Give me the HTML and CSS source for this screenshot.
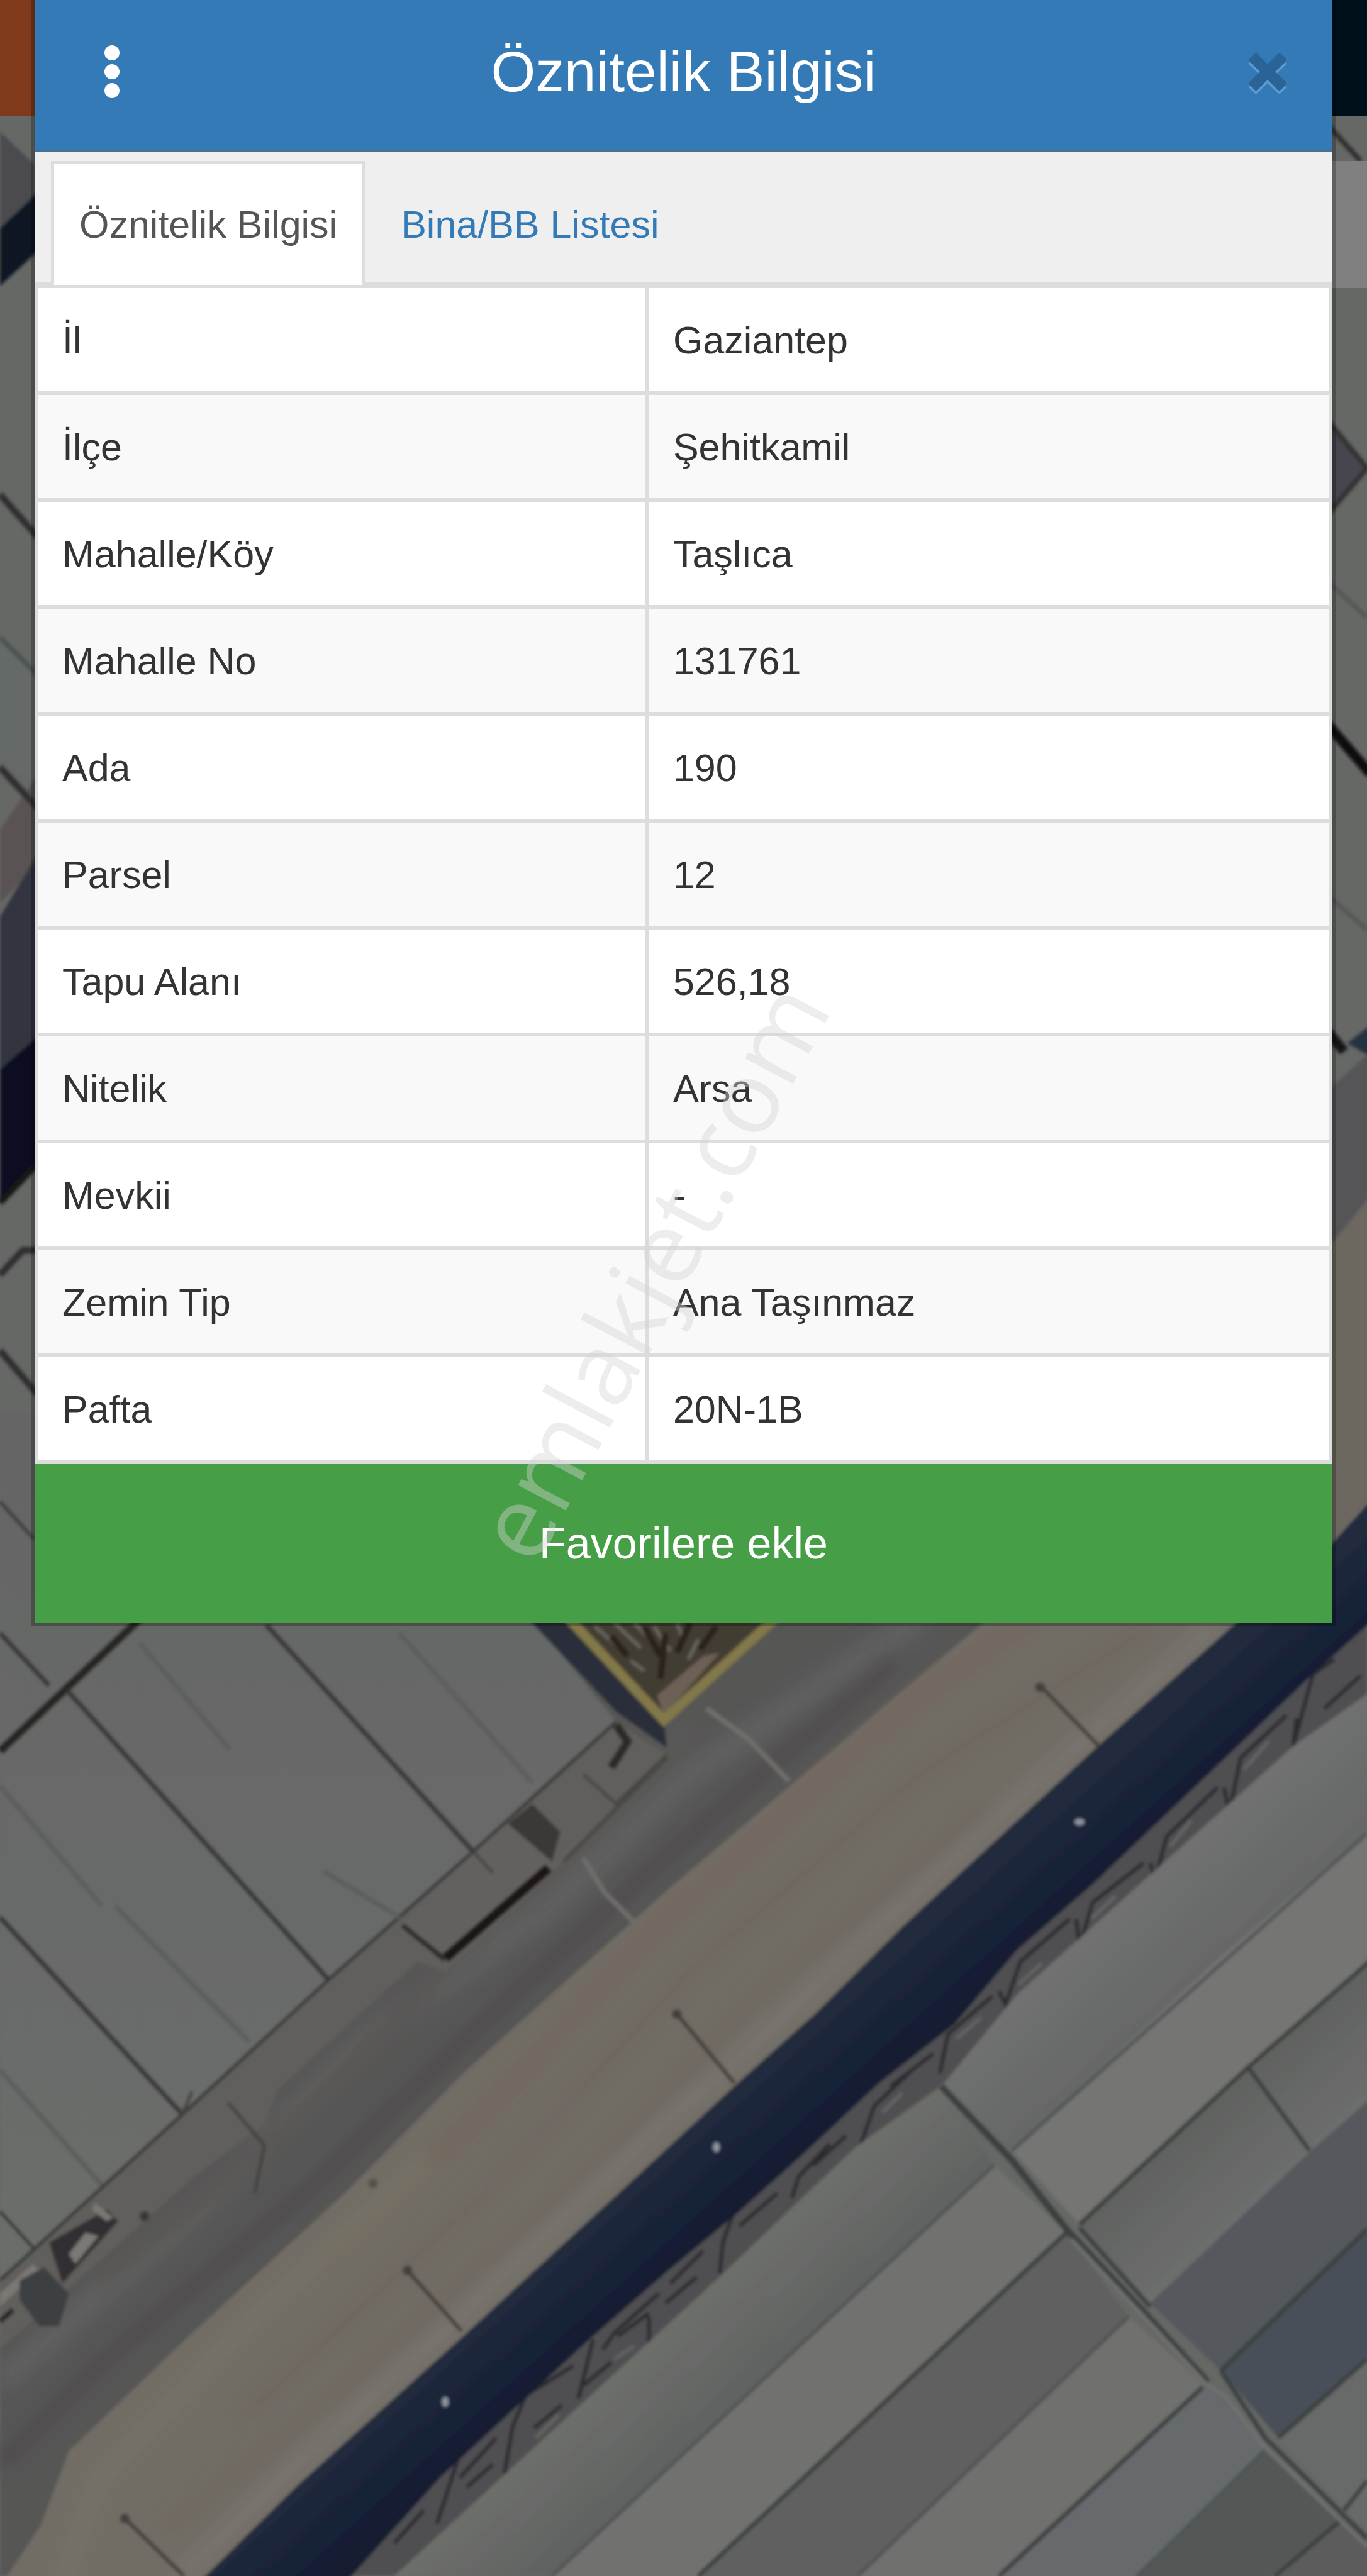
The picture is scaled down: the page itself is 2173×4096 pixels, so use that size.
FILE: index.html
```html
<!DOCTYPE html>
<html lang="tr">
<head>
<meta charset="utf-8">
<meta name="viewport" content="width=device-width, initial-scale=1">
<title>Öznitelik Bilgisi</title>
<link rel="stylesheet" href="styles.css">
</head>
<body>
<div class="page">
  <svg class="map" viewBox="0 0 832 1568" preserveAspectRatio="xMidYMid slice" aria-hidden="true">
    <defs>
      <filter id="soft" x="-5%" y="-5%" width="110%" height="110%"><feGaussianBlur stdDeviation="1.1"/></filter>
      <filter id="softer" x="-10%" y="-10%" width="120%" height="120%"><feGaussianBlur stdDeviation="5"/></filter>
      <linearGradient id="roof" gradientUnits="userSpaceOnUse" x1="0" y1="900" x2="0" y2="1390">
        <stop offset="0" stop-color="#656565"/><stop offset="0.5" stop-color="#686a69"/><stop offset="1" stop-color="#6b6e6b"/>
      </linearGradient>
      <linearGradient id="shed" gradientUnits="userSpaceOnUse" x1="640" y1="1190" x2="690" y2="1245">
        <stop offset="0" stop-color="#717272"/><stop offset="1" stop-color="#656766"/>
      </linearGradient>
      <linearGradient id="shed-low" gradientUnits="userSpaceOnUse" x1="440" y1="1390" x2="490" y2="1445">
        <stop offset="0" stop-color="#6c6e6b"/><stop offset="1" stop-color="#5c5f5e"/>
      </linearGradient>
      <linearGradient id="shed-mid" gradientUnits="userSpaceOnUse" x1="700" y1="1310" x2="750" y2="1365">
        <stop offset="0" stop-color="#5f615f"/><stop offset="1" stop-color="#6e6f6f"/>
      </linearGradient>
      <linearGradient id="canal" gradientUnits="userSpaceOnUse" x1="480" y1="1240" x2="525" y2="1290">
        <stop offset="0" stop-color="#232b3d"/><stop offset="0.45" stop-color="#192339"/><stop offset="1" stop-color="#14192e"/>
      </linearGradient>
    </defs>
    <rect width="832" height="1568" fill="#666866"/>
    <g filter="url(#soft)">
      <!-- road and sand lot -->
      <path fill="#575655" d="M300 960H832V1060L240 1568H0V1380Z"/>
      <path fill="#716d65" d="M640 960H832V1000L127 1590H-10L25 1537L42 1492L113 1424L212 1333L282 1262L408 1149L597 989Z"/>
      <g filter="url(#softer)" fill="none">
        <path stroke="#5f5e5e" stroke-width="16" d="M560 985L420 1080L330 1165L230 1235L120 1345L0 1450"/>
        <path stroke="#4f4e4d" stroke-width="12" d="M545 1010L400 1135L290 1235L180 1340L60 1440L0 1500"/>
        <path stroke="#5a5856" stroke-width="12" d="M420 1050L340 1130L180 1290L60 1390"/>
        <path stroke="#73685f" stroke-width="12" d="M640 975L550 1040L400 1175L290 1290L200 1375"/>
        <path stroke="#6a645c" stroke-width="5" d="M700 990L560 1080L420 1200L300 1330L150 1470"/>
        <path stroke="#6b665d" stroke-width="5" d="M600 1100L460 1215L360 1320L200 1460L100 1540"/>
        <path stroke="#766f65" stroke-width="14" d="M260 1315L150 1415L60 1510L35 1580"/>
        <path stroke="#7a7672" stroke-width="8" d="M740 989L655 1063L540 1168L440 1262L400 1296L275 1415L170 1510L110 1568"/>
      </g>
      <!-- lots beside the road -->
      <path fill="#605e5b" d="M375 1048L406 1068L375 1098L343 1133L334 1142L271 1200L254 1194L169 1272L161 1293L118 1325L42 1393L0 1430V1388L111 1287L200 1205L288 1127Z"/>
      <path fill="#3d3737" d="M324 1098L341 1115L336 1133L309 1110Z"/>
      <path fill="#646160" d="M309 1110L336 1135L270 1189L245 1171L288 1127Z"/>
      <!-- left roofs -->
      <path fill="url(#roof)" d="M0 860H300L327 989L375 1048L288 1127L200 1205L111 1287L0 1388Z"/>
      <g fill="none" stroke="#393937" stroke-width="2">
        <path d="M375 1048L288 1127L200 1205L111 1287L0 1388"/>
        <path stroke="#252521" stroke-width="5" d="M90 981L0 1066"/>
        <path d="M0 994L30 1026M41 1029L200 1205" stroke-width="3"/>
        <path d="M162 989L288 1127" stroke-width="3"/>
        <path d="M0 1167L111 1287" stroke-width="3"/>
        <path d="M0 1346L21 1369M0 914L21 937"/>
        <path stroke="#1f1918" stroke-width="6" d="M334 1137L271 1192"/>
        <path stroke="#302927" stroke-width="3" d="M245 1172L271 1193"/>
        <path stroke="#494743" d="M406 1068L375 1098L355 1080M406 1070L343 1133M288 1127L300 1140"/>
        <path stroke="#45423e" d="M139 1280L161 1306L155 1335M111 1287L117 1273"/>
        <path stroke="#2d2b29" stroke-width="5" d="M375 1050L382 1060L372 1076"/>
      </g>
      <g fill="none" stroke="#5c5e5c" stroke-width="3">
        <path d="M85 1000L140 1065M197 1139L243 1167M70 1160L152 1243M0 1087L62 1160M0 1260L62 1330M243 994L324 1085"/>
      </g>
      <!-- parked truck and clutter -->
      <path fill="#302f31" d="M30 1365L65 1345L72 1352L38 1390Z"/>
      <path fill="#7b7875" d="M42 1372L52 1359L60 1361L46 1378ZM58 1341L69 1350L65 1352L56 1345ZM0 1396L20 1378L24 1382L0 1404Z"/>
      <path fill="#3d3f42" d="M12 1388L27 1380L42 1396L36 1416L24 1416L12 1400Z"/>
      <path fill="none" stroke="#292321" stroke-width="3" d="M0 1413L8 1406"/>
      <circle cx="88" cy="1349" r="3" fill="#393735"/><circle cx="227" cy="1329" r="3" fill="#56514c"/>
      <path fill="none" stroke="#6f6e6c" stroke-width="3" d="M430 1040L455 1058L480 1084M355 1131L368 1152L386 1170"/>
      <!-- parcel in selection -->
      <path fill="#292d3b" d="M322 986L375 1042L406 1064L404 1047L348 986Z"/>
      <path fill="#433c33" d="M348 986H469L404 1047Z"/>
      <path fill="none" stroke="#6b665f" stroke-width="2" d="M362 990L378 1004M374 988L390 1003M386 988L396 998M398 990L408 1005M412 988L416 998M384 1011L392 1017M425 998L419 1010"/>
      <path fill="none" stroke="#2a221b" stroke-width="4" d="M372 996L382 1008M392 990L402 1008M405 994L402 1022M420 988L412 1006M436 990L426 1004"/>
      <path fill="#6d6156" d="M404 1044L438 1006L428 1008L400 1032Z"/>
      <path fill="none" stroke="#827849" stroke-width="6" d="M345 984L404 1047L473 984"/>
      <!-- lattice strip -->
      <path fill="#505051" d="M832 970V1032L787 1063L746 1104L703 1144L657 1185L619 1214L576 1266L522 1306L487 1338L438 1386L395 1427L350 1469L307 1508L240 1568H190L268 1490L449 1330L619 1170Z"/>
      <g fill="none" stroke="#2c2c30" stroke-width="2.4">
        <path d="M828 1020L806 1040M812 1010L799 1019L787 1063L789 1046M783 1044L755 1070L748 1104L745 1088M741 1088L710 1118L703 1144L700 1134M696 1134L665 1158L657 1185L655 1168M651 1168L621 1194L612 1220L608 1212M604 1215L577 1238L572 1262M568 1250L542 1270M562 1244L537 1264M553 1262L532 1282L524 1305M515 1300L495 1318M510 1290L490 1308M505 1305L486 1325L482 1338M473 1335L450 1355M467 1328L448 1342L440 1365L438 1384M428 1370L408 1390M424 1386L405 1402M401 1396L374 1420L367 1430M395 1408L376 1422M395 1410V1427M361 1424L352 1460M372 1438L355 1452M349 1440L320 1458L312 1477L307 1506M342 1464L325 1478M302 1484L280 1508M300 1500L284 1514M279 1496L266 1536M262 1510L230 1545M258 1528L240 1548M225 1548L215 1562"/>
      </g>
      <path fill="none" stroke="#656565" stroke-width="2" d="M772 1060L757 1077M725 1108L712 1124M679 1154L664 1168M634 1195L620 1208M597 1228L582 1241M549 1274L537 1286M386 1428L374 1436M340 1470L326 1484"/>
      <!-- canal -->
      <path fill="url(#canal)" d="M845 902L811 939L751 989L668 1063L549 1173L497 1225L449 1268L408 1306L282 1422L181 1513L115 1578H205L268 1508L310 1469L361 1422L408 1381L449 1347L489 1311L535 1268L581 1232L619 1187L665 1147L751 1065L800 1018L845 978Z"/>
      <g fill="#8f959f"><ellipse cx="657" cy="1109" rx="3" ry="2"/><ellipse cx="436" cy="1307" rx="2" ry="3"/><ellipse cx="271" cy="1462" rx="2" ry="3"/></g>
      <g fill="none" stroke="#45403b" stroke-width="2.4">
        <path d="M633 1026L669 1063M412 1226L447 1268M248 1382L281 1419M76 1533L112 1568"/>
      </g>
      <g fill="#45413c"><circle cx="633" cy="1027" r="3"/><circle cx="412" cy="1226" r="3"/><circle cx="248" cy="1382" r="3"/><circle cx="76" cy="1533" r="3"/></g>
      <!-- right sheds -->
      <path fill="url(#shed)" d="M845 1022L787 1063L619 1214L573 1270L616 1309L743 1191L845 1104Z"/>
      <path fill="#747473" d="M845 1104L743 1191L616 1309L657 1354L760 1258L845 1184Z"/>
      <path fill="url(#shed-mid)" d="M845 1184L657 1354L700 1402L797 1310L845 1268Z"/>
      <path fill="#54585c" d="M845 1268L797 1310L700 1402L743 1443L845 1346Z"/>
      <path fill="#4a4f58" d="M845 1346L743 1443L778 1484L845 1424Z"/>
      <path fill="#686b69" d="M845 1424L778 1484L845 1552Z"/>
      <path fill="url(#shed-low)" d="M573 1270L522 1306L438 1386L240 1568H336L408 1501L605 1318Z"/>
      <path fill="#71726f" d="M605 1318L408 1501L330 1574H420L649 1359Z"/>
      <path fill="#5e605f" d="M649 1359L418 1574H516L687 1410Z"/>
      <path fill="#6f706e" d="M687 1410L516 1574H602L732 1451Z"/>
      <path fill="#666b6d" d="M732 1451L602 1574H686L770 1491Z"/>
      <path fill="#525856" d="M770 1491L686 1574H766L816 1532Z"/>
      <path fill="#5b5b5c" d="M816 1532L766 1574H845V1556Z"/>
      <g fill="none" stroke="#3b3f3e" stroke-width="2.6">
        <path d="M573 1270L616 1315L649 1357L695 1406L735 1450" stroke-width="4"/>
        <path d="M657 1356L700 1404M743 1443L770 1484L832 1545"/>
        <path d="M845 1184L760 1258L657 1354M760 1259L797 1309M649 1359L425 1568M732 1453L608 1568M832 1357L743 1443M832 1436L778 1484M832 1510L818 1528M816 1534L776 1568"/>
        <path stroke="#505352" stroke-width="2" d="M832 1116L616 1309M605 1318L408 1501L336 1568M687 1410L522 1568M770 1491L692 1568"/>
      </g>
      <path fill="none" stroke="#6f7371" stroke-width="2" d="M652 1363L697 1411L735 1452L745 1458L770 1490L832 1550"/>
      <!-- strip left of the panel -->
      <path fill="#4b4b50" d="M0 80L21 100V120L0 140Z"/>
      <path fill="#0e1222" d="M0 139L24 116V152L0 174Z"/>
      <path fill="#656b69" d="M0 388L24 411V480L0 460Z"/>
      <path fill="#5a5353" d="M0 505L24 470V525L0 550Z"/>
      <path fill="#30343f" d="M0 558L24 518V632L0 651Z"/>
      <path fill="#070d21" d="M0 651L24 630V706L0 730Z"/>
      <g fill="none" stroke="#2e2f2e" stroke-width="4">
        <path d="M0 301L24 328M0 467L24 493"/>
        <path stroke="#4d5250" stroke-width="3" d="M0 388L24 412"/>
        <path d="M0 776L14 761H24M0 822L24 850"/>
        <path stroke="#151515" d="M0 732L24 707"/>
      </g>
      <!-- strip right of the panel -->
      <path fill="#47444d" d="M808 255L832 285L808 314Z"/>
      <g fill="none" stroke="#2e2f2e" stroke-width="3">
        <path d="M808 76L828 98"/><path stroke="#333" d="M808 256L832 285L808 313"/>
        <path stroke="#575957" d="M808 354L832 376M808 545L832 566"/>
        <path stroke="#0f0f0f" stroke-width="6" d="M808 441L834 471"/>
        <path stroke="#171717" stroke-width="6" d="M808 628L818 640"/>
      </g>
      <path fill="#27303f" d="M820 635L834 624V643Z"/>
      <path fill="#555558" d="M808 664L834 640V732L808 760Z"/>
      <path fill="#6c675f" d="M808 760L834 728V912L808 942Z"/>
    </g>
  </svg>
  <div class="app-bar"></div>
  <div class="search-box"></div>

  <main class="panel">
    <header class="panel-header">
      <button class="icon-button menu-button" type="button" aria-label="Menü">
        <svg width="24" height="84" viewBox="0 0 24 84"><g fill="#fff"><circle cx="12" cy="12" r="12"/><circle cx="12" cy="42" r="12"/><circle cx="12" cy="72" r="12"/></g></svg>
      </button>
      <h1 class="panel-title">Öznitelik Bilgisi</h1>
      <button class="icon-button close-button" type="button" aria-label="Kapat">
        <svg width="62" height="60" viewBox="0 0 62 60">
          <path fill="#5c9bd1" transform="translate(0 5)" d="M14 1L31 18L48 1Q51 0 53 2L60 9Q62 12 60 14L43 30L60 46Q62 49 60 51L52 59Q49 61 47 59L31 43L15 59Q12 61 10 59L2 51Q0 49 2 46L19 30L2 14Q0 11 2 9L10 2Q12 0 14 1Z"/>
          <path fill="#2a6496" d="M14 1L31 18L48 1Q51 0 53 2L60 9Q62 12 60 14L43 30L60 46Q62 49 60 51L52 59Q49 61 47 59L31 43L15 59Q12 61 10 59L2 51Q0 49 2 46L19 30L2 14Q0 11 2 9L10 2Q12 0 14 1Z"/>
        </svg>
      </button>
    </header>
    <nav class="tabs">
      <a class="tab tab-active" href="#oznitelik" aria-current="page">Öznitelik Bilgisi</a>
      <a class="tab" href="#bina">Bina/BB Listesi</a>
    </nav>
    <table class="attributes" id="oznitelik">
      <tbody>
        <tr><th scope="row">İl</th><td>Gaziantep</td></tr>
        <tr><th scope="row">İlçe</th><td>Şehitkamil</td></tr>
        <tr><th scope="row">Mahalle/Köy</th><td>Taşlıca</td></tr>
        <tr><th scope="row">Mahalle No</th><td>131761</td></tr>
        <tr><th scope="row">Ada</th><td>190</td></tr>
        <tr><th scope="row">Parsel</th><td>12</td></tr>
        <tr><th scope="row">Tapu Alanı</th><td>526,18</td></tr>
        <tr><th scope="row">Nitelik</th><td>Arsa</td></tr>
        <tr><th scope="row">Mevkii</th><td>-</td></tr>
        <tr><th scope="row">Zemin Tip</th><td>Ana Taşınmaz</td></tr>
        <tr><th scope="row">Pafta</th><td>20N-1B</td></tr>
      </tbody>
    </table>
    <button class="favorite-button" type="button">Favorilere ekle</button>
  </main>

  <div class="watermark"><span class="watermark-text">emlakjet.com</span></div>
</div>
</body>
</html>
```

FILE: styles.css
```css
* {
  box-sizing: border-box;
}

body {
  margin: 0;
  background: #666866;
  color: #333;
  font-family: "Liberation Sans", Arial, sans-serif;
  font-size: 61px;
  line-height: 88px;
}

.page {
  position: relative;
  min-height: 100vh;
  overflow: hidden;
}

.map {
  position: absolute;
  inset: 0;
  width: 100%;
  height: 100%;
}

.app-bar {
  position: absolute;
  top: 0;
  left: 0;
  right: 0;
  height: 185px;
  background: linear-gradient(to right, #7f391b 50%, #00101b 50%);
}

.search-box {
  position: absolute;
  top: 256px;
  right: 0;
  width: 50%;
  height: 202px;
  background: #808080;
}

.panel {
  position: relative;
  margin: 0 55px;
  box-shadow: 0 0 0 5px rgba(0, 0, 0, 0.25);
}

.panel-header {
  display: grid;
  grid-template-columns: 1fr auto 1fr;
  align-items: center;
  padding: 54px 72px 65px;
  border-bottom: 2px solid #4b708f;
  background: #337ab7;
}

.panel-title {
  margin: 0;
  color: #fff;
  font-size: 91px;
  font-weight: 400;
  line-height: 120px;
}

.icon-button {
  display: flex;
  padding: 0;
  border: 0;
  background: none;
}

.icon-button svg {
  overflow: visible;
}

.menu-button {
  justify-self: start;
  margin-left: 39px;
}

.close-button {
  justify-self: end;
}

.tabs {
  display: flex;
  gap: 11px;
  padding: 15px 26px 0;
  border-bottom: 5px solid #ddd;
  background: #efefef;
}

.tab {
  margin-bottom: -5px;
  padding: 52px 40px;
  border: 5px solid transparent;
  border-bottom: 0;
  color: #337ab7;
  text-decoration: none;
}

.tab-active {
  border-color: #ddd;
  background: #fff;
  color: #555;
}

.attributes {
  width: 100%;
  table-layout: fixed;
  border: 0 solid #ddd;
  border-width: 5px 0 0 6px;
  border-spacing: 0;
  background: #fff;
}

.attributes th,
.attributes td {
  padding: 39px 38px 37px;
  border: 0 solid #ddd;
  border-width: 0 6px 6px 0;
  font-weight: 400;
  text-align: left;
}

.attributes th {
  width: 47.2%;
}

.attributes tr:nth-child(even) {
  background: #f9f9f9;
}

.favorite-button {
  display: block;
  width: 100%;
  padding: 82px 38px;
  border: 0;
  background: #469e46;
  color: #fff;
  font-family: inherit;
  font-size: 70px;
  line-height: 88px;
}

.watermark {
  position: absolute;
  inset: 0;
  display: flex;
  align-items: center;
  justify-content: center;
  pointer-events: none;
}

.watermark-text {
  padding-bottom: 124px;
  transform: rotate(-62deg);
  color: rgba(213, 213, 213, 0.42);
  font-family: "Open Sans", sans-serif;
  font-size: 161px;
  line-height: 1;
}
```
